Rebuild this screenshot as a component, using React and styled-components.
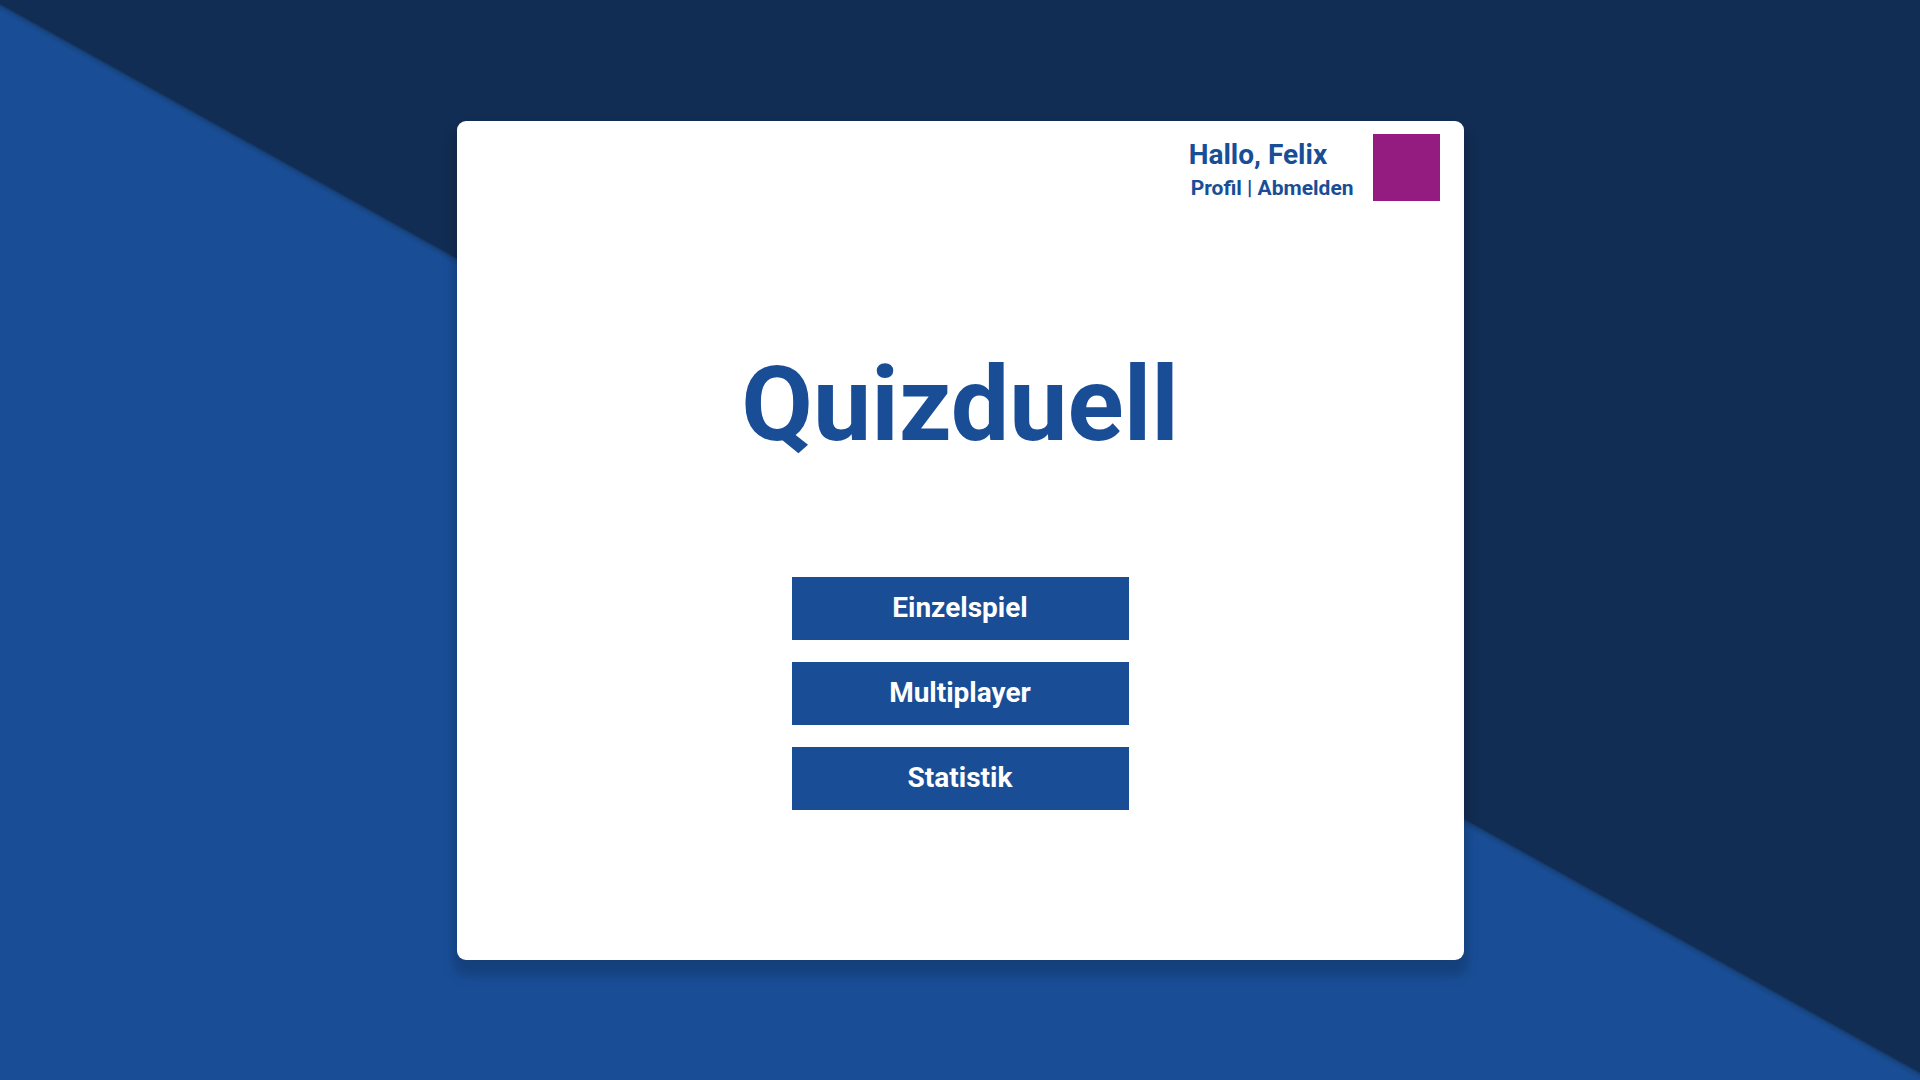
import React from "react";
import styled, { createGlobalStyle } from "styled-components";

const blue = "#194e97";
const navy = "#122d53";

const GlobalStyle = createGlobalStyle`
  *, *::before, *::after { box-sizing: border-box; }
  body { margin: 0; font-family: Roboto, "Liberation Sans", sans-serif; }
`;

const Page = styled.div`
  min-height: 100vh;
  display: flex;
  align-items: center;
  justify-content: center;
  background: linear-gradient(
    29.1deg,
    ${blue} calc(50% - 6px),
    #174684 calc(50% - 1px),
    #143a6e calc(50% + 1px),
    ${navy} calc(50% + 2px)
  );
`;

const Card = styled.main`
  width: min(1007px, 92%);
  padding: 13px 24px 150px;
  border-radius: 9px;
  background: #fff;
  color: ${blue};
  box-shadow: 0 12px 12px 4px rgba(0, 0, 0, 0.18);
`;

const Header = styled.header`
  display: flex;
  justify-content: flex-end;
  align-items: flex-start;
  gap: 19px;
`;

const UserInfo = styled.div`
  display: flex;
  flex-direction: column;
  gap: 1px;
  padding-top: 5px;
`;

const Greeting = styled.p`
  margin: 0;
  font-size: 28px;
  line-height: 32px;
  font-weight: 700;
`;

const UserLinks = styled.nav`
  padding-left: 2px;
  font-size: 21px;
  line-height: 32px;
  font-weight: 700;
`;

const UserLink = styled.a`
  color: inherit;
  text-decoration: none;
`;

const Avatar = styled.div`
  width: 67px;
  height: 67px;
  background: #941b80;
`;

const Title = styled.h1`
  margin: 141px 0 112px;
  font-size: 104px;
  line-height: 120px;
  font-weight: 700;
  text-align: center;
`;

const Menu = styled.div`
  display: flex;
  flex-direction: column;
  align-items: center;
  gap: 22px;
`;

const MenuButton = styled.button`
  width: min(337px, 100%);
  height: 63px;
  border: 0;
  background: ${blue};
  color: #fff;
  font: 700 28px/32px Roboto, "Liberation Sans", sans-serif;
  cursor: pointer;
`;

export default function App() {
  return (
    <Page>
      <GlobalStyle />
      <Card>
        <Header>
          <UserInfo>
            <Greeting>Hallo, Felix</Greeting>
            <UserLinks>
              <UserLink href="#profil">Profil</UserLink> |{" "}
              <UserLink href="#abmelden">Abmelden</UserLink>
            </UserLinks>
          </UserInfo>
          <Avatar />
        </Header>
        <Title>Quizduell</Title>
        <Menu>
          {["Einzelspiel", "Multiplayer", "Statistik"].map((label) => (
            <MenuButton key={label} type="button">{label}</MenuButton>
          ))}
        </Menu>
      </Card>
    </Page>
  );
}
